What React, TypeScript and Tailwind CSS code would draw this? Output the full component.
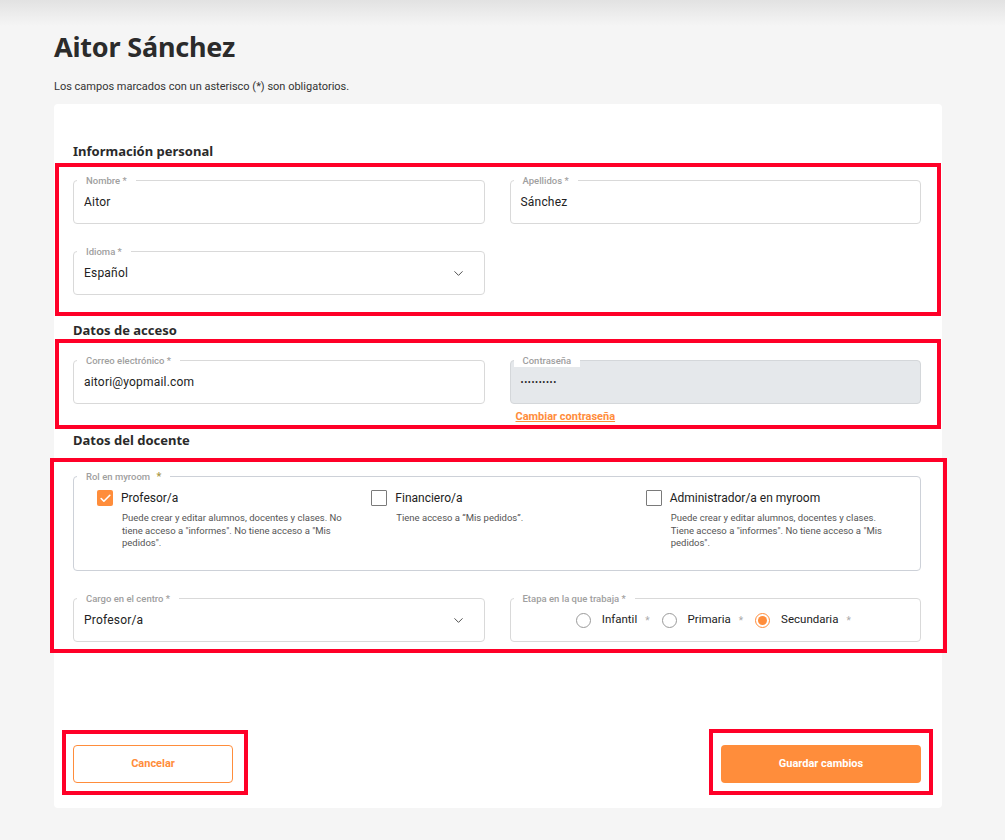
import { ReactNode } from 'react'
import { ChevronDown, Check } from 'lucide-react'
import clsx from 'clsx'

const Field = ({ label, children, className }: { label: ReactNode; children?: ReactNode; className?: string }) => (
  <div className={clsx('relative flex h-[44px] items-center rounded-[4px] border px-[10px]', className ?? 'border-[#d9d9d9] bg-white')}>
    <span className="absolute -top-[6px] left-[3px] bg-white px-[9px] text-[9.5px] font-medium leading-[12px] text-[#a0a0a0]">
      {label}
    </span>
    {children}
  </div>
)

const Value = ({ children }: { children: ReactNode }) => (
  <span className="text-[12px] leading-[14px] tracking-[0.2px] text-[#222]">{children}</span>
)

const Heading = ({ children, className }: { children: ReactNode; className?: string }) => (
  <h2 className={clsx("font-['Noto_Sans',sans-serif] text-[13px] font-bold leading-[18px] text-[#2a2a2a]", className)}>
    {children}
  </h2>
)

const Role = ({ checked, title, desc }: { checked?: boolean; title: string; desc: string }) => (
  <div className="flex flex-col">
    <div className="flex items-center gap-[8px]">
      {checked ? (
        <span className="flex h-[16px] w-[16px] items-center justify-center rounded-[2px] bg-[#ff8d3b]">
          <Check size={13} strokeWidth={3} className="text-white" />
        </span>
      ) : (
        <span className="h-[16px] w-[16px] rounded-[1px] border border-[#7a7a7a] bg-white" />
      )}
      <span className="text-[12px] leading-[16px] text-[#222]">{title}</span>
    </div>
    <p className="ml-[25px] mt-[6px] w-[226px] text-[9.5px] leading-[12.5px] text-[#555]">{desc}</p>
  </div>
)

const Radio = ({ checked, label }: { checked?: boolean; label: string }) => (
  <div className="flex items-center">
    {checked ? (
      <span className="flex h-[15px] w-[15px] items-center justify-center rounded-full border-[1.5px] border-[#ff8d3b]">
        <span className="h-[9px] w-[9px] rounded-full bg-[#ff8d3b]" />
      </span>
    ) : (
      <span className="h-[15px] w-[15px] rounded-full border border-[#9a9a9a]" />
    )}
    <span className="ml-[11px] text-[11.5px] text-[#222]">{label}</span>
    <span className="ml-[8px] text-[10px] text-[#aaa]">*</span>
  </div>
)

export default function App() {
  return (
    <div className="relative min-h-[840px] bg-[#f5f5f5] bg-[linear-gradient(to_bottom,#e2e2e2,#f5f5f5_26px)] pl-[54px] pt-[31px] font-['Roboto',sans-serif]">
      <h1 className="font-['Noto_Sans',sans-serif] text-[27px] font-bold leading-[32px] tracking-[-0.2px] text-[#2b2b2b]">
        Aitor Sánchez
      </h1>
      <p className="mt-[17px] text-[11px] leading-[14px] text-[#333]">
        Los campos marcados con un asterisco (*) son obligatorios.
      </p>

      <div className="mt-[10px] w-[888px] rounded-[4px] bg-white pb-[25px] pl-[19px] pr-[21px] pt-[38px]">
        <Heading>Información personal</Heading>
        <div className="mt-[20px] grid grid-cols-2 gap-x-[25px] gap-y-[27px]">
          <Field label="Nombre *">
            <Value>Aitor</Value>
          </Field>
          <Field label="Apellidos *">
            <Value>Sánchez</Value>
          </Field>
          <Field label="Idioma *">
            <Value>Español</Value>
            <ChevronDown size={15} strokeWidth={1.5} className="ml-auto mr-[8px] text-[#444]" />
          </Field>
        </div>

        <Heading className="mt-[26px]">Datos de acceso</Heading>
        <div className="mt-[21px] grid grid-cols-2 gap-x-[25px]">
          <Field label="Correo electrónico *">
            <Value>aitori@yopmail.com</Value>
          </Field>
          <div className="flex flex-col">
            <Field label="Contraseña" className="border-[#d4d7da] bg-[#e5e8eb]">
              <span className="text-[9px] leading-[14px] tracking-[0.6px] text-[#222]">••••••••••</span>
            </Field>
            <a className="ml-[6px] mt-[6px] text-[11px] font-bold leading-[14px] text-[#ff8d3b] underline">
              Cambiar contraseña
            </a>
          </div>
        </div>

        <Heading className="mt-[7px]">Datos del docente</Heading>
        <div className="relative mt-[27px] grid h-[95px] grid-cols-3 rounded-[4px] border border-[#cdd1d8] pl-[23px] pt-[13px]">
          <span className="absolute -top-[6px] left-[3px] bg-white px-[9px] text-[9.5px] font-medium leading-[12px] text-[#a0a0a0]">
            Rol en myroom <span className="ml-[4px] text-[11px] text-[#a89642]">*</span>
          </span>
          <Role
            checked
            title="Profesor/a"
            desc={'Puede crear y editar alumnos, docentes y clases. No tiene acceso a "informes". No tiene acceso a "Mis pedidos".'}
          />
          <Role title="Financiero/a" desc={'Tiene acceso a “Mis pedidos”.'} />
          <Role
            title="Administrador/a en myroom"
            desc={'Puede crear y editar alumnos, docentes y clases. Tiene acceso a "informes". No tiene acceso a "Mis pedidos".'}
          />
        </div>

        <div className="mt-[27px] grid grid-cols-2 gap-x-[25px]">
          <Field label="Cargo en el centro *">
            <Value>Profesor/a</Value>
            <ChevronDown size={15} strokeWidth={1.5} className="ml-auto mr-[8px] text-[#444]" />
          </Field>
          <Field label="Etapa en la que trabaja *">
            <div className="flex w-full items-center justify-center gap-[12px] pr-[4px]">
              <Radio label="Infantil" />
              <Radio label="Primaria" />
              <Radio checked label="Secundaria" />
            </div>
          </Field>
        </div>

        <div className="mt-[103px] flex items-center justify-between">
          <button className="h-[38px] w-[160px] rounded-[4px] border border-[#ff8d3b] bg-white text-[11px] font-bold text-[#ff8d3b]">
            Cancelar
          </button>
          <button className="h-[38px] w-[200px] rounded-[4px] bg-[#ff8d3b] text-[11px] font-bold text-white">
            Guardar cambios
          </button>
        </div>
      </div>

      {/* annotation frames */}
      <div className="pointer-events-none absolute left-[55px] top-[163px] h-[153px] w-[886px] border-[4px] border-[#ff0028]" />
      <div className="pointer-events-none absolute left-[55px] top-[339px] h-[90px] w-[886px] border-[4px] border-[#ff0028]" />
      <div className="pointer-events-none absolute left-[50px] top-[458px] h-[195px] w-[897px] border-[4px] border-[#ff0028]" />
      <div className="pointer-events-none absolute left-[62px] top-[730px] h-[65px] w-[186px] border-[4px] border-[#ff0028]" />
      <div className="pointer-events-none absolute left-[709px] top-[729px] h-[66px] w-[224px] border-[4px] border-[#ff0028]" />
    </div>
  )
}
